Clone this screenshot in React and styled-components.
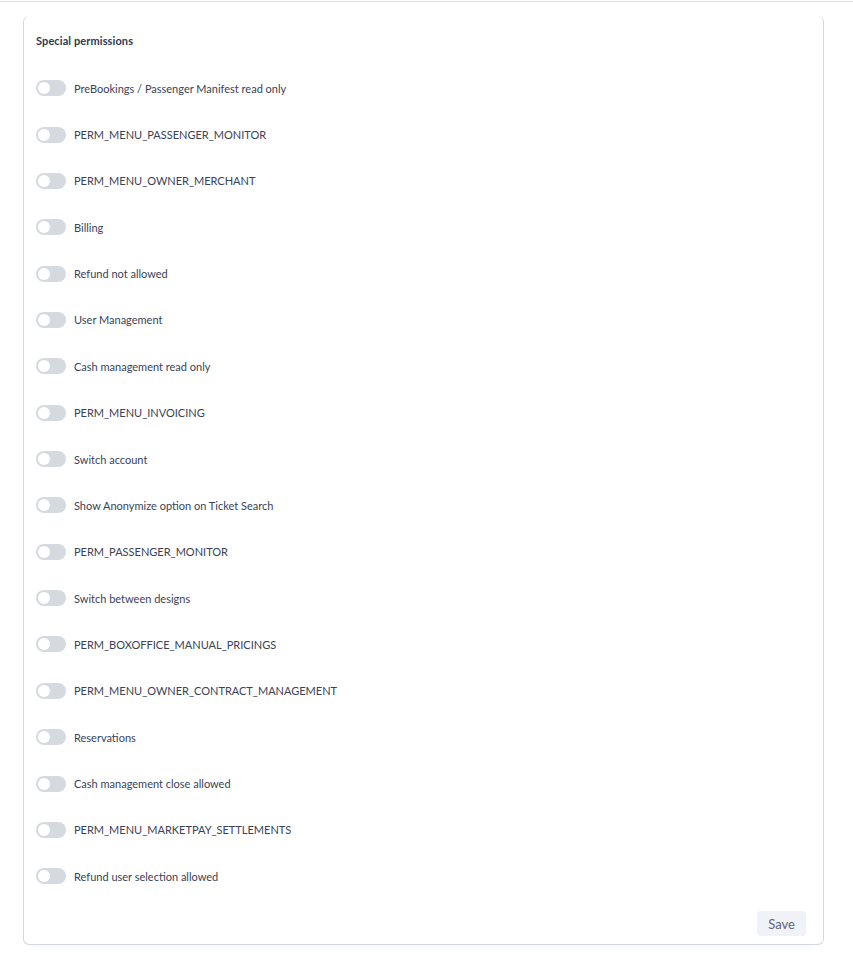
import React, { useState } from 'react'
import styled, { createGlobalStyle } from 'styled-components'

const GlobalStyle = createGlobalStyle`
  html, body {
    margin: 0;
    padding: 0;
    background: #ffffff;
    font-family: Lato, 'Noto Sans', sans-serif;
  }
`

const TopBar = styled.div`
  height: 1px;
  border-bottom: 1px solid #dcdfe5;
`

const Page = styled.div`
  padding: 14px 29px 16px 23px;
`

const Card = styled.section`
  width: 801px;
  box-sizing: border-box;
  border: 1px solid #d3d7df;
  border-top: none;
  border-radius: 6px;
  box-shadow: 0 6px 8px -6px rgba(30, 40, 60, 0.06);
  padding: 18px 12px 8px 12px;
`

const Title = styled.h3`
  margin: 0;
  font-size: 11px;
  line-height: 14px;
  font-weight: 700;
  color: #2f3a4f;
  letter-spacing: 0.1px;
  margin-bottom: 17px;
`

const List = styled.div`
  display: flex;
  flex-direction: column;
`

const Row = styled.label`
  display: flex;
  align-items: center;
  gap: 8px;
  height: 46.36px;
  cursor: pointer;
`

const Track = styled.span`
  position: relative;
  width: 30px;
  height: 16px;
  border-radius: 8px;
  background: ${({ $on }) => ($on ? '#4c6ef5' : '#d5d9e0')};
  flex-shrink: 0;
  transition: background 0.2s;
  &::after {
    content: '';
    position: absolute;
    top: 2px;
    left: ${({ $on }) => ($on ? '16px' : '2px')};
    width: 12px;
    height: 12px;
    border-radius: 50%;
    background: #ffffff;
    transition: left 0.2s;
  }
`

const Label = styled.span`
  font-size: 11px;
  color: #3a4256;
`

const Footer = styled.div`
  display: flex;
  justify-content: flex-end;
  margin-top: 12px;
  padding-right: 5px;
`

const SaveButton = styled.button`
  border: none;
  background: #f0f2f7;
  color: #5d6578;
  font-family: inherit;
  font-size: 13px;
  height: 25px;
  padding: 0 11px;
  border-radius: 4px;
  cursor: pointer;
`

const PERMISSIONS = [
  'PreBookings / Passenger Manifest read only',
  'PERM_MENU_PASSENGER_MONITOR',
  'PERM_MENU_OWNER_MERCHANT',
  'Billing',
  'Refund not allowed',
  'User Management',
  'Cash management read only',
  'PERM_MENU_INVOICING',
  'Switch account',
  'Show Anonymize option on Ticket Search',
  'PERM_PASSENGER_MONITOR',
  'Switch between designs',
  'PERM_BOXOFFICE_MANUAL_PRICINGS',
  'PERM_MENU_OWNER_CONTRACT_MANAGEMENT',
  'Reservations',
  'Cash management close allowed',
  'PERM_MENU_MARKETPAY_SETTLEMENTS',
  'Refund user selection allowed'
]

export default function App () {
  const [checked, setChecked] = useState({})
  const toggle = (key) => setChecked(prev => ({ ...prev, [key]: !prev[key] }))

  return (
    <>
      <GlobalStyle />
      <TopBar />
      <Page>
        <Card>
          <Title>Special permissions</Title>
          <List>
            {PERMISSIONS.map(item => (
              <Row key={item} onClick={() => toggle(item)}>
                <Track $on={!!checked[item]} />
                <Label>{item}</Label>
              </Row>
            ))}
          </List>
          <Footer>
            <SaveButton>Save</SaveButton>
          </Footer>
        </Card>
      </Page>
    </>
  )
}
